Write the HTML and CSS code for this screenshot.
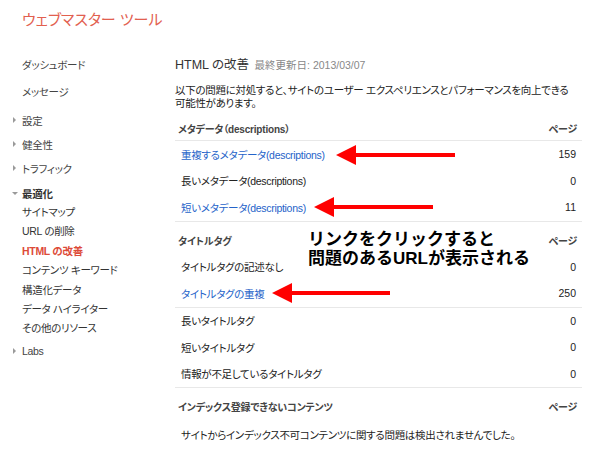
FILE: index.html
```html
<!DOCTYPE html>
<html lang="ja">
<head>
<meta charset="utf-8">
<title>ウェブマスター ツール</title>
<link rel="stylesheet" href="styles.css">
</head>
<body>
<div class="app">
  <header class="top"><span class="brand">ウェブマスター ツール</span></header>
  <div class="layout">
    <nav class="side">
      <div class="nav-item tall">ダッシュボード</div>
      <div class="nav-item tall2">メッセージ</div>
      <div class="nav-item gap"><span class="caret"></span>設定</div>
      <div class="nav-item"><span class="caret"></span>健全性</div>
      <div class="nav-item"><span class="caret"></span>トラフィック</div>
      <div class="nav-item open"><span class="caret down"></span>最適化</div>
      <div class="sub">
        <div class="sub-item">サイトマップ</div>
        <div class="sub-item">URL の削除</div>
        <div class="sub-item active">HTML の改善</div>
        <div class="sub-item">コンテンツ キーワード</div>
        <div class="sub-item">構造化データ</div>
        <div class="sub-item">データ ハイライター</div>
        <div class="sub-item">その他のリソース</div>
      </div>
      <div class="nav-item"><span class="caret"></span>Labs</div>
    </nav>
    <main class="main">
      <h1 class="title">HTML の改善 <span class="updated">最終更新日: 2013/03/07</span></h1>
      <p class="intro">以下の問題に対処すると、サイトのユーザー エクスペリエンスとパフォーマンスを向上できる<br>可能性があります。</p>

      <section class="sec">
        <div class="sec-head ruled"><span>メタデータ（descriptions）</span><span>ページ</span></div>
        <div class="row"><a class="link" href="#">重複するメタデータ(descriptions)</a><span class="num">159</span></div>
        <div class="row"><span>長いメタデータ(descriptions)</span><span class="num">0</span></div>
        <div class="row ruled"><a class="link" href="#">短いメタデータ(descriptions)</a><span class="num">11</span></div>
      </section>

      <section class="sec">
        <div class="sec-head titles"><span>タイトルタグ</span><span>ページ</span></div>
        <div class="row"><span>タイトルタグの記述なし</span><span class="num">0</span></div>
        <div class="row ruled"><a class="link" href="#">タイトルタグの重複</a><span class="num">250</span></div>
        <div class="row"><span>長いタイトルタグ</span><span class="num">0</span></div>
        <div class="row"><span>短いタイトルタグ</span><span class="num">0</span></div>
        <div class="row ruled"><span>情報が不足しているタイトルタグ</span><span class="num">0</span></div>
      </section>

      <section class="sec">
        <div class="sec-head open-head"><span>インデックス登録できないコンテンツ</span><span>ページ</span></div>
        <div class="row"><span>サイトからインデックス不可コンテンツに関する問題は検出されませんでした。</span></div>
      </section>
    </main>
  </div>

  <svg class="arrows" width="600" height="458" viewBox="0 0 600 458">
    <polygon points="336,155 356,145 356,153 455,153 455,157 356,157 356,165"/>
    <polygon points="314,207 334,197 334,205 433,205 433,209 334,209 334,217"/>
    <polygon points="272,293 292,283 292,291 390,291 390,295 292,295 292,303"/>
  </svg>
  <div class="note">リンクをクリックすると<br>問題のあるURLが表示される</div>
</div>
</body>
</html>
```

FILE: styles.css
```css
html, body {
  margin: 0;
  padding: 0;
  background: #fff;
}

.app {
  position: relative;
  width: 600px;
  height: 458px;
  overflow: hidden;
  background: #fff;
  font-family: "Liberation Sans", "Noto Sans CJK JP", sans-serif;
  font-feature-settings: "palt";
  color: #222;
}

.top {
  height: 40px;
  display: flex;
  align-items: center;
  padding-left: 22px;
}

.brand {
  font-size: 15px;
  color: #e2604f;
  line-height: 20px;
}

.layout {
  display: flex;
}

.side {
  width: 175px;
  flex: none;
  padding-top: 11px;
  font-size: 10.5px;
  letter-spacing: -0.3px;
  color: #444;
}

.nav-item {
  display: flex;
  align-items: center;
  height: 24px;
  padding-left: 22px;
  position: relative;
}

.nav-item.tall { height: 27px; }
.nav-item.tall2 { height: 27px; }
.nav-item.gap { margin-top: 3px; }
.nav-item.open {
  height: 20px;
  margin-top: 3px;
  font-weight: bold;
  color: #333;
}

.caret {
  position: absolute;
  left: 13px;
  top: 50%;
  margin-top: -3px;
  width: 0;
  height: 0;
  border-left: 3px solid #9a9a9a;
  border-top: 3px solid transparent;
  border-bottom: 3px solid transparent;
}

.caret.down {
  left: 12px;
  margin-top: -1px;
  border-left: 3px solid transparent;
  border-right: 3px solid transparent;
  border-top: 3px solid #9a9a9a;
  border-bottom: 0;
}

.sub-item {
  height: 19.4px;
  line-height: 19.4px;
  padding-left: 22px;
  color: #333;
}

.sub-item.active {
  color: #dd4b39;
  font-weight: bold;
}

.main {
  flex: 1;
  padding: 15px 18px 0 0;
}

.title {
  margin: 0;
  font-size: 12.5px;
  line-height: 20px;
  font-weight: normal;
  color: #333;
}

.updated {
  font-size: 10.5px;
  color: #888;
  margin-left: 2px;
}

.intro {
  margin: 9px 0 0 0;
  font-size: 10.5px;
  letter-spacing: -0.3px;
  line-height: 13px;
  white-space: nowrap;
  color: #222;
}

.sec-head {
  display: flex;
  justify-content: space-between;
  padding: 13px 5px 3px 3px;
  line-height: 14px;
  font-size: 10px;
  letter-spacing: -0.2px;
  font-weight: bold;
  color: #444;
}

.sec-head.ruled {
  border-bottom: 1px solid #e8e8e8;
}

.sec-head.titles {
  padding-bottom: 5px;
}

.sec-head.open-head {
  padding-bottom: 6px;
}

.row {
  display: flex;
  justify-content: space-between;
  align-items: center;
  height: 26.5px;
  padding: 0 6px;
  font-size: 10.5px;
  letter-spacing: -0.3px;
  color: #222;
}

.row.ruled {
  border-bottom: 1px solid #e8e8e8;
}

.link {
  color: #2563c9;
  text-decoration: none;
}

.num {
  color: #222;
  letter-spacing: 0;
}

.arrows {
  position: absolute;
  left: 0;
  top: 0;
  pointer-events: none;
  fill: #ff0000;
}

.note {
  position: absolute;
  left: 308px;
  top: 230px;
  font-size: 17px;
  line-height: 19px;
  font-weight: bold;
  color: #000;
  font-feature-settings: normal;
}
```
